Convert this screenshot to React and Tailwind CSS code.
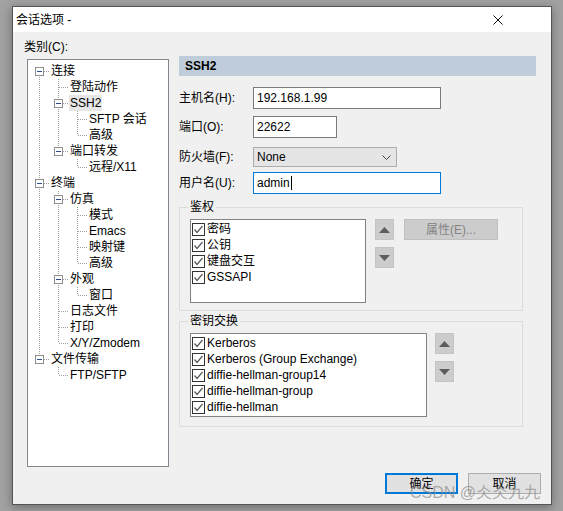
import React from 'react';

const tree = [
  {
    label: '连接',
    children: [
      { label: '登陆动作' },
      { label: 'SSH2', selected: true, children: [{ label: 'SFTP 会话' }, { label: '高级' }] },
      { label: '端口转发', children: [{ label: '远程/X11' }] },
    ],
  },
  {
    label: '终端',
    children: [
      { label: '仿真', children: [{ label: '模式' }, { label: 'Emacs' }, { label: '映射键' }, { label: '高级' }] },
      { label: '外观', children: [{ label: '窗口' }] },
      { label: '日志文件' },
      { label: '打印' },
      { label: 'X/Y/Zmodem' },
    ],
  },
  { label: '文件传输', children: [{ label: 'FTP/SFTP' }] },
];

const flatten = (nodes, level = 0, pipes = [], out = []) => {
  nodes.forEach((n, i) => {
    const last = i === nodes.length - 1;
    out.push({ ...n, level, pipes, last, first: level === 0 && i === 0, hasKids: !!n.children });
    if (n.children) flatten(n.children, level + 1, [...pipes, !last], out);
  });
  return out;
};

const LINE = '#a0a0a0';

const TreeLines = ({ row }) => {
  const w = 19 * (row.level + 1);
  const left = row.level * 19;
  const cx = left + 8.5;
  return (
    <svg width={w} height={16} className="shrink-0" shapeRendering="crispEdges">
      <g stroke={LINE} strokeDasharray="1 1">
        {row.pipes.map((p, a) =>
          p ? <line key={a} x1={a * 19 + 8.5} y1={0} x2={a * 19 + 8.5} y2={16} /> : null
        )}
        {!row.first && <line x1={cx} y1={0} x2={cx} y2={8} />}
        {!row.last && <line x1={cx} y1={8} x2={cx} y2={16} />}
        <line x1={row.hasKids ? left + 13 : left + 9} y1={8.5} x2={w} y2={8.5} />
      </g>
      {row.hasKids && (
        <g>
          <rect x={left + 4.5} y={4.5} width={8} height={8} fill="#fff" stroke="#8f8f8f" />
          <line x1={left + 6} y1={8.5} x2={left + 11} y2={8.5} stroke="#2f4d8c" />
        </g>
      )}
    </svg>
  );
};

const Check = () => (
  <svg width="13" height="13" className="shrink-0" shapeRendering="crispEdges">
    <rect x="0.5" y="0.5" width="12" height="12" fill="#fff" stroke="#333" />
    <path d="M2.5 6.5 L5 9.5 L10.5 3" fill="none" stroke="#5a5a5a" strokeWidth="1.2" shapeRendering="auto" />
  </svg>
);

const Arrow = ({ up }) => (
  <div className="w-[19px] h-[21px] bg-[#cccccc] border border-[#c4c4c4] flex items-center justify-center">
    <svg width="11" height="6">
      <path d={up ? 'M0 6 L5.5 0 L11 6 Z' : 'M0 0 L5.5 6 L11 0 Z'} fill="#5c5c5c" />
    </svg>
  </div>
);

const CheckList = ({ items, width, pt }) => (
  <div className={`${width} h-[84px] bg-white border border-[#828282] ${pt} pl-[1px] shrink-0`}>
    {items.map((t) => (
      <div key={t} className="h-[16px] flex items-center gap-[2px]">
        <Check />
        <span>{t}</span>
      </div>
    ))}
  </div>
);

const Field = ({ label, children }) => (
  <div className="flex items-center">
    <span className="w-[74px] shrink-0">{label}</span>
    {children}
  </div>
);

const App = () => {
  const rows = flatten(tree);

  return (
    <div className="w-[563px] h-[511px] bg-[#a2a2a2] pt-[6px] pl-[12px] font-['Liberation_Sans','Noto_Sans_CJK_SC',sans-serif] text-[12px] leading-[16px] text-black overflow-hidden">
      <div className="relative w-[540px] h-[499px] border border-[#555] bg-[#f0f0f0] shadow-[0_2px_10px_rgba(0,0,0,0.35)] flex flex-col">
        {/* Title bar */}
        <div className="h-[25px] bg-white flex items-center justify-between pl-[3px] pr-[48px] shrink-0">
          <span>会话选项 -</span>
          <svg width="10" height="10">
            <path d="M0.5 0.5 L9.5 9.5 M9.5 0.5 L0.5 9.5" stroke="#111" strokeWidth="1" />
          </svg>
        </div>

        <div className="flex flex-1">
          {/* Left column */}
          <div className="pl-[11px] pt-[7px] w-[156px] shrink-0">
            <div>类别(C):</div>
            <div className="ml-[3px] mt-[4px] w-[142px] h-[408px] bg-white border border-[#828790] pt-[3px] pl-[3px]">
              {rows.map((row, i) => (
                <div key={i} className="flex h-[16px] items-center">
                  <TreeLines row={row} />
                  <span className={`px-[1px] whitespace-nowrap ${row.selected ? 'bg-[#e6e6e6]' : ''}`}>
                    {row.label}
                  </span>
                </div>
              ))}
            </div>
          </div>

          {/* Right column */}
          <div className="ml-[10px] pt-[24px] w-[357px] flex flex-col">
            <div className="h-[20px] bg-[#bfcddb] pl-[6px] flex items-center font-bold">SSH2</div>

            <div className="mt-[11px] flex flex-col">
              <Field label="主机名(H):">
                <div className="w-[188px] h-[22px] bg-white border border-[#7a7a7a] pl-[3px] flex items-center">192.168.1.99</div>
              </Field>
              <div className="mt-[7px]">
                <Field label="端口(O):">
                  <div className="w-[84px] h-[22px] bg-white border border-[#7a7a7a] pl-[3px] flex items-center">22622</div>
                </Field>
              </div>
              <div className="mt-[9px]">
                <Field label="防火墙(F):">
                  <div className="w-[144px] h-[20px] bg-[#e5e5e5] border border-[#adadad] pl-[3px] pr-[5px] flex items-center justify-between">
                    <span>None</span>
                    <svg width="9" height="5">
                      <path d="M0.5 0.5 L4.5 4.5 L8.5 0.5" fill="none" stroke="#444" />
                    </svg>
                  </div>
                </Field>
              </div>
              <div className="mt-[5px]">
                <Field label="用户名(U):">
                  <div className="w-[188px] h-[22px] bg-white border border-[#0078d7] pl-[3px] flex items-center">
                    admin<span className="inline-block w-px h-[14px] bg-black ml-px" />
                  </div>
                </Field>
              </div>
            </div>

            {/* 鉴权 */}
            <fieldset className="mt-[5px] w-[344px] border border-[#dcdcdc] pl-[10px] pb-[7px]">
              <legend className="ml-[-2px] px-[2px]">鉴权</legend>
              <div className="mt-[4px] flex items-start">
                <CheckList items={['密码', '公钥', '键盘交互', 'GSSAPI']} width="w-[176px]" pt="pt-[1px]" />
                <div className="ml-[9px] flex flex-col gap-[7px]">
                  <Arrow up />
                  <Arrow />
                </div>
                <div className="ml-[10px] w-[94px] h-[21px] bg-[#cccccc] border border-[#bfbfbf] text-[#838383] flex items-center justify-center">
                  属性(E)...
                </div>
              </div>
            </fieldset>

            {/* 密钥交换 */}
            <fieldset className="mt-[2px] w-[344px] border border-[#dcdcdc] pl-[10px] pb-[9px]">
              <legend className="ml-[-2px] px-[2px]">密钥交换</legend>
              <div className="mt-[4px] flex items-start">
                <CheckList
                  items={['Kerberos', 'Kerberos (Group Exchange)', 'diffie-hellman-group14', 'diffie-hellman-group', 'diffie-hellman']}
                  width="w-[237px]"
                  pt="pt-[1px]"
                />
                <div className="ml-[8px] flex flex-col gap-[7px]">
                  <Arrow up />
                  <Arrow />
                </div>
              </div>
            </fieldset>
          </div>
        </div>

        {/* Buttons */}
        <div className="flex justify-end gap-[10px] pr-[10px] pb-[10px] shrink-0">
          <div className="w-[73px] h-[21px] bg-[#e1e1e1] border-2 border-[#0078d7] flex items-center justify-center">确定</div>
          <div className="w-[73px] h-[21px] bg-[#e1e1e1] border border-[#adadad] flex items-center justify-center">取消</div>
        </div>

        {/* Watermark */}
        <div className="absolute left-[397px] top-[477px] text-[16px] leading-[18px] text-[#8c8c8c]/70 whitespace-nowrap pointer-events-none">
          CSDN @仌仌九九
        </div>
      </div>
    </div>
  );
};

export default App;
